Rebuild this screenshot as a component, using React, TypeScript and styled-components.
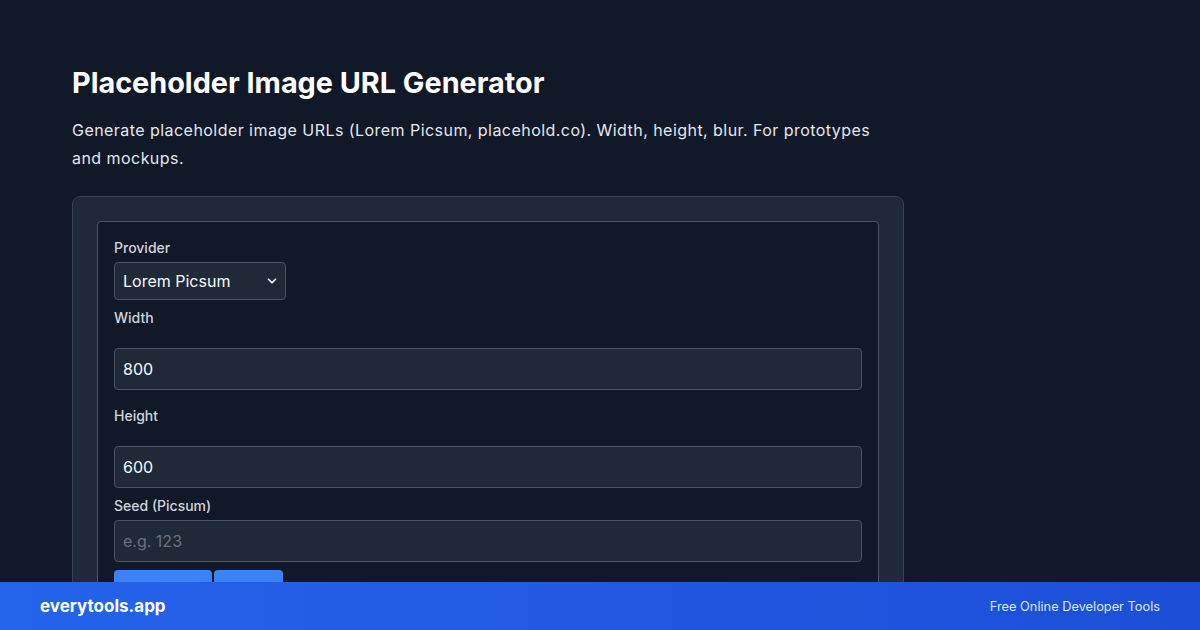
import React from "react";
import styled, { createGlobalStyle } from "styled-components";
import { ChevronDown } from "lucide-react";

const GlobalStyle = createGlobalStyle`
  html, body {
    margin: 0;
    padding: 0;
    background: #111827;
    height: 100%;
    overflow: hidden;
  }
  body {
    font-family: Inter, "Noto Sans", "Liberation Sans", sans-serif;
    color: #f9fafb;
  }
  * { box-sizing: border-box; }
`;

const App: React.FC = () => {
  return (
    <>
      <GlobalStyle />
      <Page>
        <Title>Placeholder Image URL Generator</Title>
        <Lead>
          Generate placeholder image URLs (Lorem Picsum, placehold.co). Width,
          height, blur. For prototypes and mockups.
        </Lead>

        <Card>
          <Fieldset>
            <Field>
              <Label>Provider</Label>
              <SelectWrap>
                <Select defaultValue="picsum">
                  <option value="picsum">Lorem Picsum</option>
                  <option value="placehold">placehold.co</option>
                </Select>
                <Chevron>
                  <ChevronDown size={14} strokeWidth={3} />
                </Chevron>
              </SelectWrap>
            </Field>

            <Field $gap={16}>
              <Label $spaced>Width</Label>
              <Input type="number" defaultValue="800" />
            </Field>

            <Field>
              <Label $spaced>Height</Label>
              <Input type="number" defaultValue="600" />
            </Field>

            <Field>
              <Label>Seed (Picsum)</Label>
              <Input type="text" placeholder="e.g. 123" />
            </Field>

            <Actions>
              <Button $w={98}>Generate URL</Button>
              <Button $w={69}>Copy</Button>
            </Actions>
          </Fieldset>
        </Card>
      </Page>

      <Footer>
        <Brand>everytools.app</Brand>
        <Tagline>Free Online Developer Tools</Tagline>
      </Footer>
    </>
  );
};

export default App;

const Page = styled.main`
  width: 832px;
  margin-left: 72px;
  padding-top: 66px;
`;

const Title = styled.h1`
  margin: 0 0 16px;
  font-size: 28.8px;
  line-height: 34px;
  font-weight: 700;
  color: #ffffff;
`;

const Lead = styled.p`
  margin: 0 0 24px;
  font-size: 16px;
  line-height: 28px;
  letter-spacing: 0.45px;
  color: #e5e7eb;
  max-width: 820px;
`;

const Card = styled.section`
  background: #1f2937;
  border: 1px solid #374151;
  border-radius: 8px;
  padding: 24px;
  height: 500px;
`;

const Fieldset = styled.div`
  background: #111827;
  border: 1px solid #4b5563;
  border-radius: 4px;
  padding: 16px;
  height: 500px;
`;

const Field = styled.div<{ $gap?: number }>`
  margin-bottom: ${(p) => p.$gap ?? 8}px;
`;

const Label = styled.label<{ $spaced?: boolean }>`
  display: block;
  font-size: 14px;
  line-height: 20px;
  font-weight: 500;
  color: #d1d5db;
  margin-bottom: ${(p) => (p.$spaced ? "20px" : "4px")};
`;

const SelectWrap = styled.div`
  position: relative;
  width: 172px;
`;

const Select = styled.select`
  appearance: none;
  width: 172px;
  height: 38px;
  padding: 0 28px 0 8px;
  font-family: inherit;
  font-size: 16px;
  color: #f9fafb;
  background: #1f2937;
  border: 1px solid #4b5563;
  border-radius: 4px;
  outline: none;
`;

const Chevron = styled.span`
  position: absolute;
  right: 7px;
  top: 12px;
  display: flex;
  color: #f3f4f6;
  pointer-events: none;
`;

const Input = styled.input`
  display: block;
  width: 100%;
  height: 42px;
  padding: 0 8px;
  font-family: inherit;
  font-size: 16px;
  color: #f9fafb;
  background: #1f2937;
  border: 1px solid #4b5563;
  border-radius: 4px;
  outline: none;
  appearance: textfield;

  &::-webkit-outer-spin-button,
  &::-webkit-inner-spin-button {
    -webkit-appearance: none;
    margin: 0;
  }

  &::placeholder {
    color: #6b7280;
  }
`;

const Actions = styled.div`
  display: flex;
  gap: 2px;
`;

const Button = styled.button<{ $w: number }>`
  width: ${(p) => p.$w}px;
  height: 38px;
  padding: 0;
  border: none;
  border-radius: 4px;
  background: #3b82f6;
  color: #ffffff;
  font-family: inherit;
  font-size: 14px;
  font-weight: 600;
  white-space: nowrap;
  overflow: hidden;
`;

const Footer = styled.footer`
  position: fixed;
  left: 0;
  right: 0;
  bottom: 0;
  height: 48px;
  padding: 0 40px;
  display: flex;
  align-items: center;
  justify-content: space-between;
  background: linear-gradient(90deg, #2563eb 0%, #1d4ed8 100%);
`;

const Brand = styled.span`
  font-size: 17px;
  font-weight: 700;
  color: #ffffff;
`;

const Tagline = styled.span`
  font-size: 12.8px;
  color: #dbeafe;
`;
